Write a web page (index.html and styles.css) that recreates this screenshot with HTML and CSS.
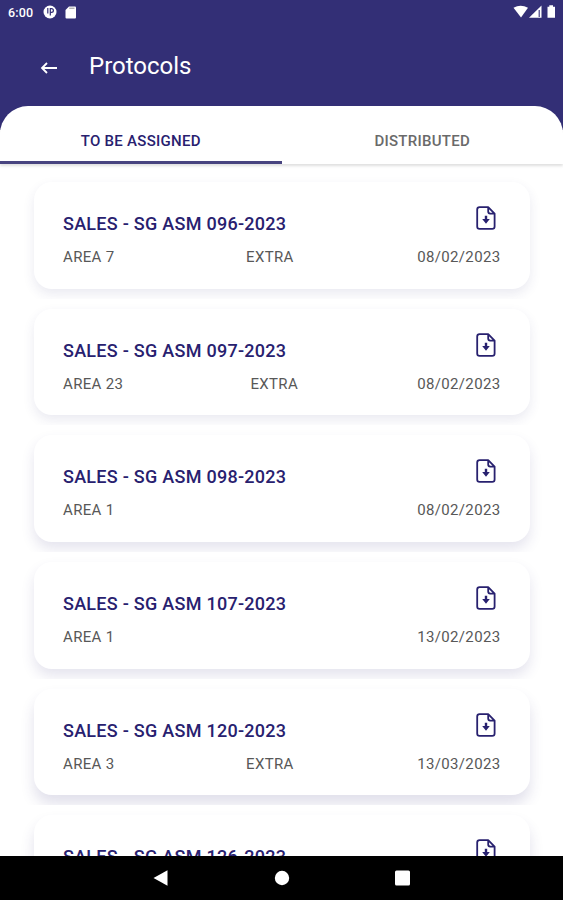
FILE: index.html
```html
<!DOCTYPE html>
<html lang="en">
<head>
<meta charset="utf-8">
<title>Protocols</title>
<link rel="stylesheet" href="styles.css">
</head>
<body>
<svg class="defs" width="0" height="0" aria-hidden="true">
  <symbol id="file" viewBox="0 0 20 24">
    <path d="M12.2 1.2H3.6Q1.2 1.2 1.2 3.6V20.4Q1.2 22.8 3.6 22.8H16.2Q18.6 22.8 18.6 20.4V7.6ZM12.2 1.2V5.6Q12.2 7.6 14.2 7.6H18.6" fill="none" stroke="currentColor" stroke-width="1.8" stroke-linejoin="round"/>
    <path d="M8.8 9.8H11.2V13H13.8L10 17.8L6.2 13H8.8Z" fill="currentColor"/>
  </symbol>
</svg>
<div class="screen">
  <header class="header">
    <div class="status">
      <span class="clock">6:00</span>
      <svg class="status-app" width="14" height="14" viewBox="0 0 14 14"><circle cx="7" cy="7" r="6.5" fill="#fff"/><path d="M4.8 3V8.5M7.3 10.5V3.6H8.4Q10.4 3.6 10.4 5.5T8.4 7.4H7.3" fill="none" stroke="#332f76" stroke-width="1.2"/></svg>
      <svg class="status-sd" width="12" height="13" viewBox="0 0 12 13"><path d="M4 .5H10Q11 .5 11 1.5V11.5Q11 12.5 10 12.5H1.5Q.5 12.5 .5 11.5V4Z" fill="#fff"/><path d="M4.2 2.2H9.5" stroke="#777" stroke-width=".8"/></svg>
      <svg class="status-right" width="44" height="14" viewBox="0 0 44 14"><path d="M1.5 2.8Q8.5 -1.2 16 2.8L9 12.6Z" fill="#fff"/><path d="M17 12.8L29.5 .5V12.8Z" fill="#fff"/><path d="M27.2 5V12" stroke="#332f76" stroke-width="1.1"/><path d="M35.5 1.7H37.3V.3H41V1.7H43V12.8H35.5Z" fill="#fff"/></svg>
    </div>
    <div class="appbar">
      <svg class="back" width="18" height="14" viewBox="0 0 18 14"><path d="M7 2L2 7L7 12M2 7H17" fill="none" stroke="#fff" stroke-width="1.8"/></svg>
      <h1 class="title">Protocols</h1>
    </div>
  </header>
  <nav class="tabs">
    <div class="tab tab-active">TO BE ASSIGNED</div>
    <div class="tab">DISTRIBUTED</div>
  </nav>
  <main class="list">
    <section class="item"><article class="card light"><div class="row"><h2>SALES - SG ASM 096-2023</h2><svg class="file"><use href="#file"/></svg></div><div class="meta"><span>AREA 7</span><span class="type">EXTRA</span><span>08/02/2023</span></div></article></section>
    <section class="item"><article class="card light"><div class="row"><h2>SALES - SG ASM 097-2023</h2><svg class="file"><use href="#file"/></svg></div><div class="meta"><span>AREA 23</span><span class="type">EXTRA</span><span>08/02/2023</span></div></article></section>
    <section class="item"><article class="card"><div class="row"><h2>SALES - SG ASM 098-2023</h2><svg class="file"><use href="#file"/></svg></div><div class="meta"><span>AREA 1</span><span>08/02/2023</span></div></article></section>
    <section class="item"><article class="card"><div class="row"><h2>SALES - SG ASM 107-2023</h2><svg class="file"><use href="#file"/></svg></div><div class="meta"><span>AREA 1</span><span>13/02/2023</span></div></article></section>
    <section class="item"><article class="card deep"><div class="row"><h2>SALES - SG ASM 120-2023</h2><svg class="file"><use href="#file"/></svg></div><div class="meta"><span>AREA 3</span><span class="type">EXTRA</span><span>13/03/2023</span></div></article></section>
    <section class="item"><article class="card deep"><div class="row"><h2>SALES - SG ASM 126-2023</h2><svg class="file"><use href="#file"/></svg></div></article></section>
  </main>
  <footer class="navbar">
    <svg width="16" height="18" viewBox="0 0 16 18"><path d="M.5 9L14.5 1.3V16.7Z" fill="#fff"/></svg>
    <svg width="16" height="16" viewBox="0 0 16 16"><circle cx="8" cy="8" r="7.2" fill="#fff"/></svg>
    <svg width="16" height="16" viewBox="0 0 16 16"><rect x="0" y=".5" width="15" height="15" rx="1.5" fill="#fff"/></svg>
  </footer>
</div>
</body>
</html>
```

FILE: styles.css
```css
* { box-sizing: border-box; }
body { margin: 0; font-family: Roboto, "Liberation Sans", sans-serif; background: #fff; }
h1, h2 { margin: 0; }
.defs { display: block; }
.screen { display: flex; flex-direction: column; height: 900px; overflow: hidden; }
.header { flex: none; height: 130px; background: #332f76; color: #fff; }
.status { display: flex; align-items: center; height: 24px; padding: 0 7px 0 8px; }
.clock { width: 27px; font-size: 12.5px; font-weight: 500; letter-spacing: .2px; white-space: nowrap; }
.status-app { margin-left: 8px; }
.status-sd { margin-left: 8px; }
.status-right { margin-left: auto; }
.appbar { display: flex; align-items: center; height: 84px; padding-left: 40px; gap: 31px; }
.back { margin-top: 3px; }
.title { font-size: 24px; line-height: 30px; font-weight: 400; }
.tabs { flex: none; display: flex; height: 58px; margin-top: -24px; background: #fff; border-radius: 28px 28px 0 0; box-shadow: 0 2px 3px rgba(0,0,0,.13); clip-path: inset(0 0 -8px 0); }
.tab { flex: 1; padding-top: 13px; height: 57.5px; line-height: 44px; text-align: center; font-size: 15px; font-weight: 500; color: #6a6a6a; letter-spacing: .28px; border-bottom: 3px solid transparent; }
.tab-active { color: #28216f; border-bottom-color: #484480; }
.list { flex: 1; min-height: 0; padding-top: 8px; overflow: hidden; }
.item { height: 126.7px; padding: 10px 33.5px; overflow: hidden; }
.card { height: 106.7px; padding: 22px 29px 0 29.5px; border-radius: 18px; background: #fff; box-shadow: 0 7px 13px rgba(52,47,120,.13); }
.light { box-shadow: 0 5px 12px rgba(52,47,120,.1); }
.deep { box-shadow: 0 9px 14px rgba(52,47,120,.15); }
.row { display: flex; justify-content: space-between; height: 40px; }
.row h2 { padding-top: 8px; font-size: 18px; line-height: 24px; font-weight: 500; letter-spacing: .27px; color: #28216f; }
.file { width: 20px; height: 24px; margin: 2px 5px 0 0; color: #28216f; }
.meta { display: flex; justify-content: space-between; padding-top: 1px; font-size: 15px; line-height: 24px; letter-spacing: .35px; color: #585858; }
.type { padding-left: 8px; }
.navbar { flex: none; display: flex; align-items: center; justify-content: center; gap: 105px; height: 44px; background: #000; }
```
